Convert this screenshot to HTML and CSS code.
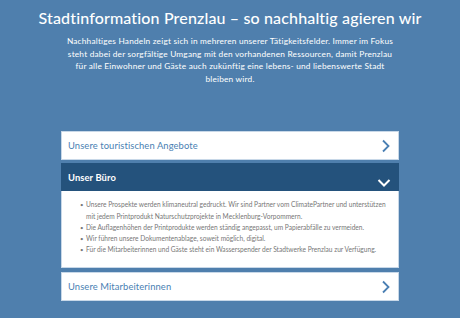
FILE: index.html
```html
<!DOCTYPE html>
<html lang="de">
<head>
<meta charset="utf-8">
<link rel="stylesheet" href="styles.css">
</head>
<body>
<main class="page">
  <header class="intro">
    <h1 class="title">Stadtinformation Prenzlau – so nachhaltig agieren wir</h1>
    <p class="lead">Nachhaltiges Handeln zeigt sich in mehreren unserer Tätigkeitsfelder. Immer im Fokus steht dabei der sorgfältige Umgang mit den vorhandenen Ressourcen, damit Prenzlau für alle Einwohner und Gäste auch zukünftig eine lebens- und liebenswerte Stadt bleiben wird.</p>
  </header>
  <section class="accordion">
    <div class="item">
      <div class="head">
        <span class="label">Unsere touristischen Angebote</span>
        <svg class="chev" width="10" height="14" viewBox="0 0 10 14"><path d="M2 1.5 L7.5 7 L2 12.5" fill="none" stroke="#4a7fb3" stroke-width="1.8"/></svg>
      </div>
    </div>
    <div class="item open">
      <div class="head head-open">
        <span class="label">Unser Büro</span>
        <svg class="chev-down" width="14" height="10" viewBox="0 0 14 10"><path d="M1.5 2 L7 7.5 L12.5 2" fill="none" stroke="#ffffff" stroke-width="2"/></svg>
      </div>
      <div class="body">
        <ul class="list">
          <li>Unsere Prospekte werden klimaneutral gedruckt. Wir sind Partner vom ClimatePartner und unterstützen mit jedem Printprodukt Naturschutzprojekte in Mecklenburg-Vorpommern.</li>
          <li>Die Auflagenhöhen der Printprodukte werden ständig angepasst, um Papierabfälle zu vermeiden.</li>
          <li>Wir führen unsere Dokumentenablage, soweit möglich, digital.</li>
          <li>Für die Mitarbeiterinnen und Gäste steht ein Wasserspender der Stadtwerke Prenzlau zur Verfügung.</li>
        </ul>
      </div>
    </div>
    <div class="item">
      <div class="head">
        <span class="label">Unsere Mitarbeiterinnen</span>
        <svg class="chev" width="10" height="14" viewBox="0 0 10 14"><path d="M2 1.5 L7.5 7 L2 12.5" fill="none" stroke="#4a7fb3" stroke-width="1.8"/></svg>
      </div>
    </div>
  </section>
</main>
</body>
</html>
```
FILE: styles.css
```css
html, body {
  margin: 0;
  padding: 0;
}
body {
  background: #4f7fad;
  font-family: Lato, "Open Sans", sans-serif;
  width: 460px;
  height: 318px;
  overflow: hidden;
}
.page {
  display: flex;
  flex-direction: column;
  align-items: center;
}
.intro {
  display: flex;
  flex-direction: column;
  align-items: center;
  padding-top: 8px;
}
.title {
  margin: 0;
  color: #ffffff;
  font-size: 16px;
  line-height: 20px;
  font-weight: 500;
  letter-spacing: 0.15px;
}
.lead {
  margin: 7px 0 0;
  width: 334px;
  color: #ffffff;
  font-size: 8.3px;
  line-height: 12.6px;
  letter-spacing: 0.2px;
  text-align: center;
}
.accordion {
  width: 338px;
  margin-top: 46px;
  display: flex;
  flex-direction: column;
  gap: 3px;
}
.item {
  background: #ffffff;
  border: 1px solid #c8d8e8;
  box-sizing: border-box;
}
.item.open {
  margin-bottom: 1px;
}
.head {
  height: 27px;
  display: flex;
  align-items: center;
  justify-content: space-between;
  padding: 0 7px 0 6px;
}
.label {
  color: #4a7fb3;
  font-size: 9.4px;
  letter-spacing: 0.1px;
}
.head-open {
  background: #24527c;
  height: 28px;
  margin: -1px -1px 0;
  padding: 0 8px 0 7px;
}
.head-open .label {
  color: #ffffff;
  font-weight: 700;
}
.chev-down {
  margin-top: 11px;
}
.body {
  padding: 8px 12px 12px 18px;
  height: 56px;
}
.list {
  margin: 0;
  padding: 0;
  list-style: none;
  color: #777777;
  font-size: 6.6px;
  line-height: 11.2px;
}
.list li {
  display: grid;
  grid-template-columns: 6px 1fr;
}
.list li::before {
  content: "•";
  font-size: 6px;
}
```
